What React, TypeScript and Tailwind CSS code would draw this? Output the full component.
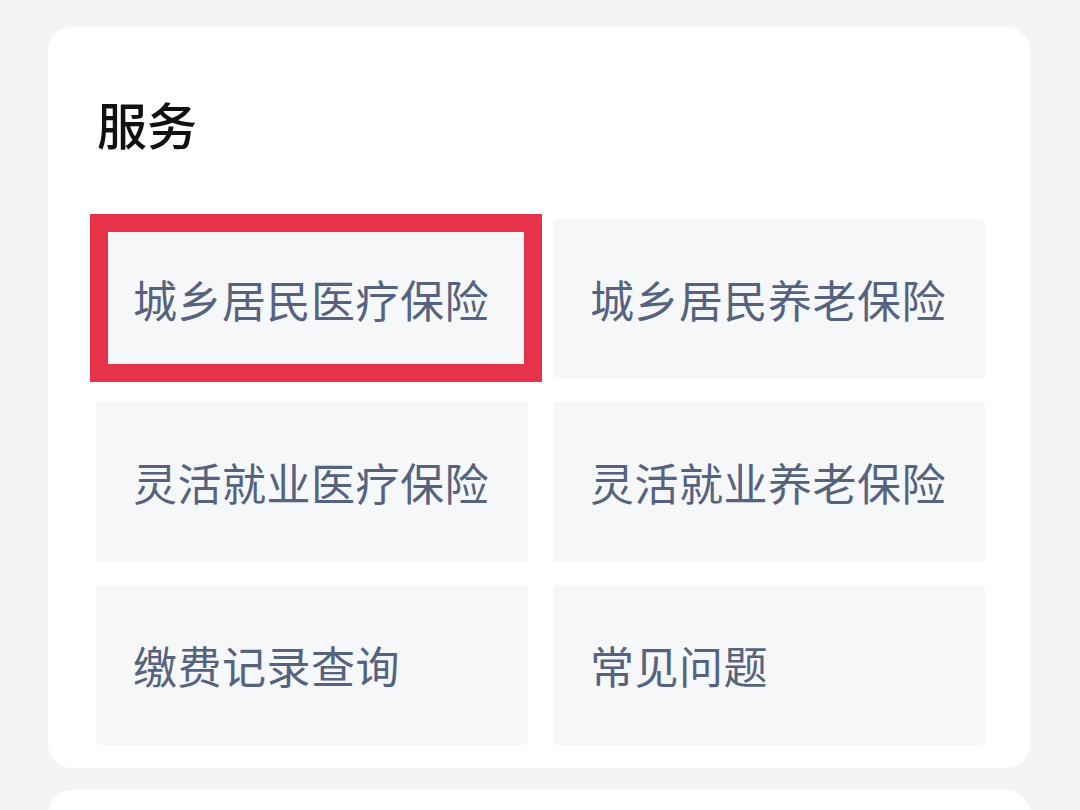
const services = [
  '城乡居民医疗保险',
  '城乡居民养老保险',
  '灵活就业医疗保险',
  '灵活就业养老保险',
  '缴费记录查询',
  '常见问题',
];

function ServiceTile({ label, marked }: { label: string; marked?: boolean }) {
  return (
    <div className="relative h-[160px] rounded-[4px] bg-[#f6f7f9] flex items-center pl-[37px]">
      <span className="text-[44px] leading-none text-[#56637e] tracking-[0.5px]">{label}</span>
      {marked && (
        <div className="absolute left-[-6px] top-[-5px] w-[452px] h-[168px] border-[18px] border-[#e6334a]" />
      )}
    </div>
  );
}

export default function App() {
  return (
    <div
      className="w-[1080px] h-[810px] overflow-hidden bg-[#f4f4f4] pt-[27px] px-[48px]"
      style={{ fontFamily: '"Noto Sans CJK SC", "Noto Sans", sans-serif' }}
    >
      <div className="w-[982px] bg-white rounded-[24px] pt-[71px] pl-[48px] pr-[45px] pb-[23px]">
        <h2 className="text-[50px] leading-[50px] font-medium text-[#111] ml-[1px]">服务</h2>
        <div className="mt-[71px] grid grid-cols-2 gap-x-[25px] gap-y-[23px]">
          {services.map((s, i) => (
            <ServiceTile key={s} label={s} marked={i === 0} />
          ))}
        </div>
      </div>
      <div className="mt-[22px] w-[982px] h-[60px] bg-white rounded-[24px]" />
    </div>
  );
}
